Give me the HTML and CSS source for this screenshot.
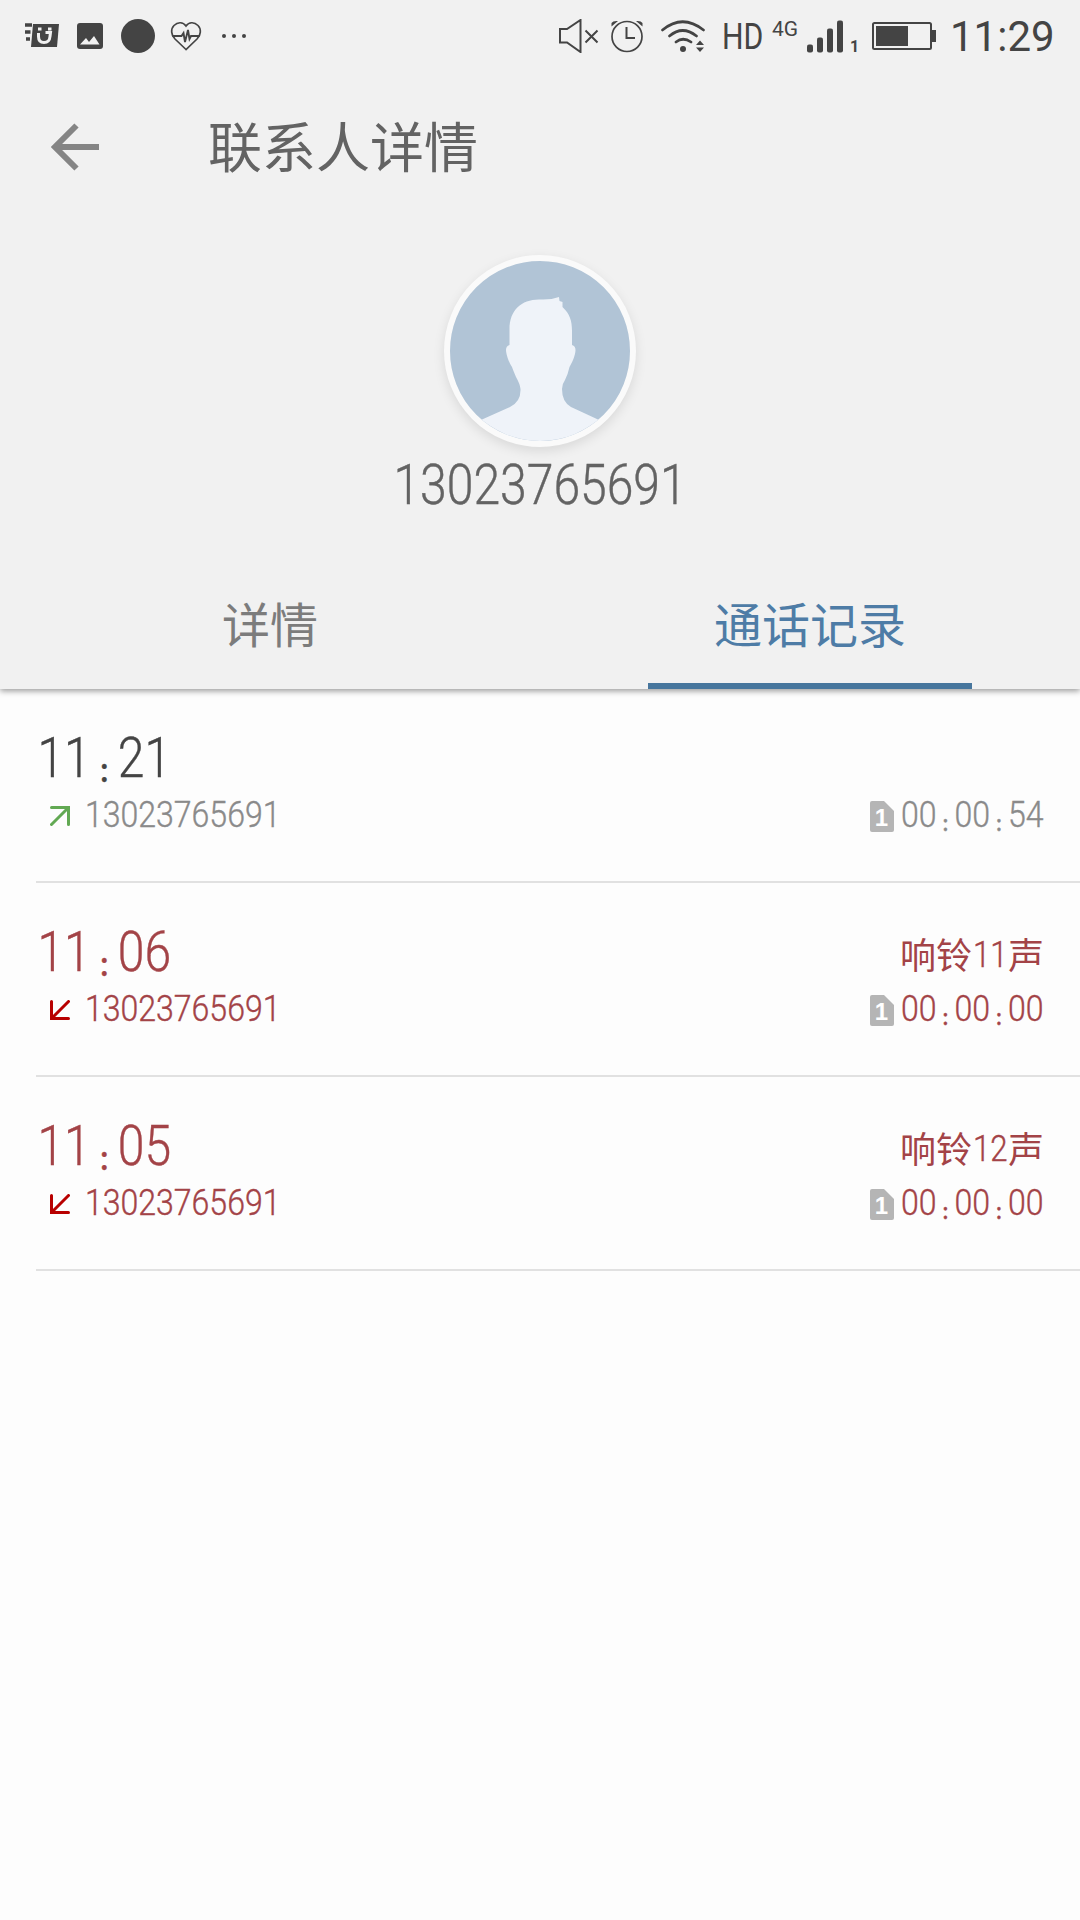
FILE: index.html
```html
<!DOCTYPE html>
<html lang="zh-CN">
<head>
  <meta charset="UTF-8">
  <title>联系人详情</title>
  <link rel="stylesheet" href="styles.css">
</head>
<body>
  <header class="header">
    <div class="status-bar">
      <svg class="icon-app" width="36" height="26" viewBox="0 0 36 26">
        <path d="M9 1h26l-2 23H7z" fill="#444"/>
        <path d="M1 2h7M1 9h5.500M2 16h4" stroke="#444" stroke-width="3.500"/>
        <path d="M14.500 10v3.500q0 6 5.500 6t6-6l.5-4h-5" fill="none" stroke="#f1f1f1" stroke-width="3"/>
        <path d="M14 6h3.500M24 6h3.500" stroke="#f1f1f1" stroke-width="3"/>
      </svg>
      <svg class="icon-image" width="26" height="26" viewBox="0 0 26 26">
        <rect width="26" height="26" rx="3" fill="#444"/>
        <path d="M3 21.500l6-6.500 3 4 5-6 5.500 8.500z" fill="#f1f1f1"/>
      </svg>
      <svg class="icon-dot" width="34" height="34" viewBox="0 0 34 34">
        <circle cx="17" cy="17" r="17" fill="#444"/>
      </svg>
      <svg class="icon-heart" width="32" height="30" viewBox="0 0 32 30">
        <path d="M16 28.500L5 18C1 14 .5 8 4 4.500 8 .5 13 1 16 5 19 1 24 .5 28 4.500 31.500 8 31 14 27 18z" fill="none" stroke="#444" stroke-width="1.700"/>
        <path d="M2.500 15h9l2-3 1.500 9 3-12 1.500 9 1.500-3h8.500" fill="none" stroke="#444" stroke-width="1.900"/>
      </svg>
      <svg class="icon-more" width="25" height="6" viewBox="0 0 25 6">
        <circle cx="2" cy="3" r="2" fill="#444"/>
        <circle cx="12" cy="3" r="2" fill="#444"/>
        <circle cx="22" cy="3" r="2" fill="#444"/>
      </svg>

      <svg class="icon-mute" width="40" height="34" viewBox="0 0 40 34">
        <path d="M1 10v13.500h7L21.500 33V1L8 10z" fill="none" stroke="#444" stroke-width="2"/>
        <path d="M26.500 11.500l12 12M38.500 11.500l-12 12" stroke="#444" stroke-width="2"/>
      </svg>
      <svg class="icon-alarm" width="34" height="34" viewBox="0 0 34 34">
        <circle cx="17" cy="17.500" r="15" fill="none" stroke="#444" stroke-width="1.700"/>
        <path d="M16.500 8v11H25" fill="none" stroke="#444" stroke-width="2"/>
        <path d="M1.500 7.500L1.500 4Q3 1.500 8 2zM32.500 7.500L32.500 4Q31 1.500 26 2z" fill="#444"/>
      </svg>
      <svg class="icon-wifi" width="44" height="34" viewBox="0 0 44 34">
        <path d="M1.500 11q20-16.500 41 0M8.500 17q13-11 27 0M15 23q7-5.500 15 0" fill="none" stroke="#444" stroke-width="2.700" stroke-linecap="round"/>
        <circle cx="22" cy="30" r="3" fill="#444"/>
        <path d="M35 26l4-4.500 4 4.500zM35 28.500h8L39 33z" fill="#444"/>
      </svg>
      <span class="hd">HD</span>
      <span class="net">4G</span>
      <svg class="icon-signal" width="36" height="33" viewBox="0 0 36 33">
        <rect x="0" y="24.500" width="6" height="8" rx="2" fill="#444"/>
        <rect x="10" y="17.500" width="6" height="15" rx="2" fill="#444"/>
        <rect x="20" y="8.500" width="6" height="24" rx="2" fill="#444"/>
        <rect x="30" y="0.500" width="6" height="32" rx="2" fill="#444"/>
      </svg>
      <span class="sim-no">1</span>
      <svg class="icon-battery" width="64" height="28" viewBox="0 0 64 28">
        <rect x="1" y="1" width="58" height="26" rx="1.500" fill="none" stroke="#444" stroke-width="2"/>
        <rect x="4" y="4" width="32" height="20" fill="#444"/>
        <rect x="60" y="8" width="4" height="12" fill="#444"/>
      </svg>
      <span class="clock">11:29</span>
    </div>

    <div class="toolbar">
      <svg class="back" width="50" height="48" viewBox="0 0 50 48">
        <path d="M49 24H6M26.500 2.500L5 24l21.500 21.500" fill="none" stroke="#858585" stroke-width="6"/>
      </svg>
      <h1 class="title">联系人详情</h1>
    </div>

    <div class="profile">
      <div class="avatar">
        <svg width="180" height="180" viewBox="0 0 180 180">
          <path d="M0 180V172L32 158.500 60 146Q71 141 70.500 128 70 123 66 116 63 109 62 106C59 102 56 93 56 89Q56 85 59.500 84V68C59.500 49 72 38 90 38.500Q101 39 109 36L109.500 40 112.500 41V46C120 53 122 60 122 70V84Q125.500 85 125.500 89C125.500 94 122 102 119.500 106Q118 113 115 119 112 123 112 128 112 141 121 146L148 158.500 180 173V180z" fill="#eff3f9"/>
        </svg>
      </div>
      <div class="phone"><span class="num">13023765691</span></div>
    </div>

    <nav class="tabs">
      <a class="tab">详情</a>
      <a class="tab active">通话记录</a>
    </nav>
  </header>

  <main class="calls">
    <div class="call">
      <div class="line">
        <div class="time"><span class="num">11<i>:</i>21</span></div>
      </div>
      <div class="line small">
        <svg class="arrow" width="20" height="20" viewBox="0 0 20 20">
          <path d="M1.500 1.500h17v17M18.500 1.500l-17 17" fill="none" stroke="#62a953" stroke-width="3" stroke-linecap="round"/>
        </svg>
        <div class="from"><span class="num">13023765691</span></div>
        <svg class="sim" width="24" height="31" viewBox="0 0 24 31">
          <path d="M2 0h12l10 10v19q0 2-2 2H2q-2 0-2-2V2q0-2 2-2z" fill="#b5b5b5"/>
          <text x="11.500" y="25">1</text>
        </svg>
        <div class="duration"><span class="num">00<i>:</i>00<i>:</i>54</span></div>
      </div>
    </div>

    <div class="call missed">
      <div class="line">
        <div class="time"><span class="num">11<i>:</i>06</span></div>
        <div class="rings">响铃<b><span class="num">11</span></b>声</div>
      </div>
      <div class="line small">
        <svg class="arrow" width="20" height="20" viewBox="0 0 20 20">
          <path d="M1.500 1.500v17h17M1.500 18.500l17-17" fill="none" stroke="#b80000" stroke-width="3" stroke-linecap="round"/>
        </svg>
        <div class="from"><span class="num">13023765691</span></div>
        <svg class="sim" width="24" height="31" viewBox="0 0 24 31">
          <path d="M2 0h12l10 10v19q0 2-2 2H2q-2 0-2-2V2q0-2 2-2z" fill="#b5b5b5"/>
          <text x="11.500" y="25">1</text>
        </svg>
        <div class="duration"><span class="num">00<i>:</i>00<i>:</i>00</span></div>
      </div>
    </div>

    <div class="call missed">
      <div class="line">
        <div class="time"><span class="num">11<i>:</i>05</span></div>
        <div class="rings">响铃<b><span class="num">12</span></b>声</div>
      </div>
      <div class="line small">
        <svg class="arrow" width="20" height="20" viewBox="0 0 20 20">
          <path d="M1.500 1.500v17h17M1.500 18.500l17-17" fill="none" stroke="#b80000" stroke-width="3" stroke-linecap="round"/>
        </svg>
        <div class="from"><span class="num">13023765691</span></div>
        <svg class="sim" width="24" height="31" viewBox="0 0 24 31">
          <path d="M2 0h12l10 10v19q0 2-2 2H2q-2 0-2-2V2q0-2 2-2z" fill="#b5b5b5"/>
          <text x="11.500" y="25">1</text>
        </svg>
        <div class="duration"><span class="num">00<i>:</i>00<i>:</i>00</span></div>
      </div>
    </div>
  </main>
</body>
</html>
```
FILE: styles.css
```css
* {
  box-sizing: border-box;
}

body {
  margin: 0;
  width: 1080px;
  height: 1920px;
  overflow: hidden;
  background: #fdfdfd;
  color: #444;
  font-family: KaiTi, "Noto Sans CJK SC", sans-serif;
}

svg {
  display: block;
  flex: none;
}

.header {
  height: 689px;
  background: #f1f1f1;
  box-shadow: 0 2px 6px rgba(0,0,0,0.4);
}

/* status bar */
.status-bar {
  display: flex;
  align-items: center;
  height: 72px;
  padding-left: 24px;
  font-family: Roboto, sans-serif;
  white-space: nowrap;
}

.icon-image { margin-left: 17px; }
.icon-dot { margin-left: 18px; }
.icon-heart { margin-left: 15px; }
.icon-more { margin-left: 20px; }
.icon-mute { margin-left: 312px; }
.icon-alarm { margin-left: 11px; }
.icon-wifi { margin-left: 17px; }

.hd {
  width: 42px;
  margin: 2px 0 0 17px;
  font-size: 36px;
  transform: scaleX(0.84);
  transform-origin: 0 50%;
}

.net {
  width: 28px;
  margin: 0 7px 15px 8px;
  font-size: 21px;
}

.sim-no {
  width: 8px;
  margin: 20px 14px 0 7px;
  font-size: 16px;
  font-weight: 700;
}

.clock {
  margin: 1px 0 0 14px;
  font-size: 42px;
}

/* title row */
.toolbar {
  display: flex;
  align-items: center;
  height: 150px;
  padding-left: 50px;
}

.title {
  margin: 0 0 5px 108px;
  font-size: 54px;
  line-height: 72px;
  font-weight: 400;
  color: #636363;
}

/* avatar and number */
.profile {
  display: flex;
  flex-direction: column;
  align-items: center;
  height: 340px;
  padding-top: 33px;
}

.avatar {
  width: 192px;
  height: 192px;
  border: 6px solid #fafafa;
  border-radius: 50%;
  background: #b1c4d6;
  overflow: hidden;
  box-shadow: 0 4px 12px rgba(0,0,0,0.1);
}

.num {
  display: inline-block;
  padding-left: 0.03em;
  font-family: Roboto, sans-serif;
  font-weight: 300;
  white-space: nowrap;
  -webkit-text-stroke: 0.4px currentColor;
  transform: scaleX(0.866);
  transform-origin: 0 50%;
}

.num i {
  display: inline-block;
  width: 0.936em;
  font-size: 0.6em;
  font-style: normal;
  font-weight: 700;
  line-height: 1;
  text-align: center;
  vertical-align: -0.16em;
}

.phone {
  width: 297px;
  font-size: 55.5px;
  line-height: 66px;
  color: #636363;
}

.tabs {
  display: flex;
  height: 127px;
}

.tab {
  display: flex;
  flex: 1;
  flex-direction: column;
  align-items: center;
  padding-top: 26px;
  font-size: 48px;
  line-height: 69px;
  color: #7c7c7c;
}

.tab.active {
  color: #4e7ca6;
}

.tab.active::after {
  content: "";
  width: 324px;
  height: 6px;
  margin-top: auto;
  background: #47769d;
}

/* call log */
.call {
  height: 194px;
  margin-left: 36px;
  padding: 37px 36px 0 0;
  border-bottom: 2px solid #e1e1e1;
}

.missed {
  color: #a34347;
}

.line {
  display: flex;
  align-items: center;
  justify-content: space-between;
  height: 60px;
}

.small {
  justify-content: flex-start;
  height: 56px;
  font-size: 37px;
  color: #8a8a8a;
}

.missed .small {
  color: #a34347;
}

.time {
  font-size: 55.5px;
  line-height: 60px;
}

.rings {
  margin-top: 6px;
  font-size: 36px;
  line-height: 60px;
  white-space: nowrap;
}

.rings b {
  display: inline-block;
  width: 36px;
  vertical-align: 2px;
}

.arrow {
  margin: 4px 14px 0 14px;
}

.from,
.duration {
  margin-bottom: 2px;
  line-height: 54px;
}

.sim {
  margin: 4px 6px 0 auto;
}

.sim text {
  font-family: "Liberation Sans", sans-serif;
  font-size: 24px;
  font-weight: 700;
  text-anchor: middle;
  fill: #fff;
}

.duration {
  width: 144px;
}
```
